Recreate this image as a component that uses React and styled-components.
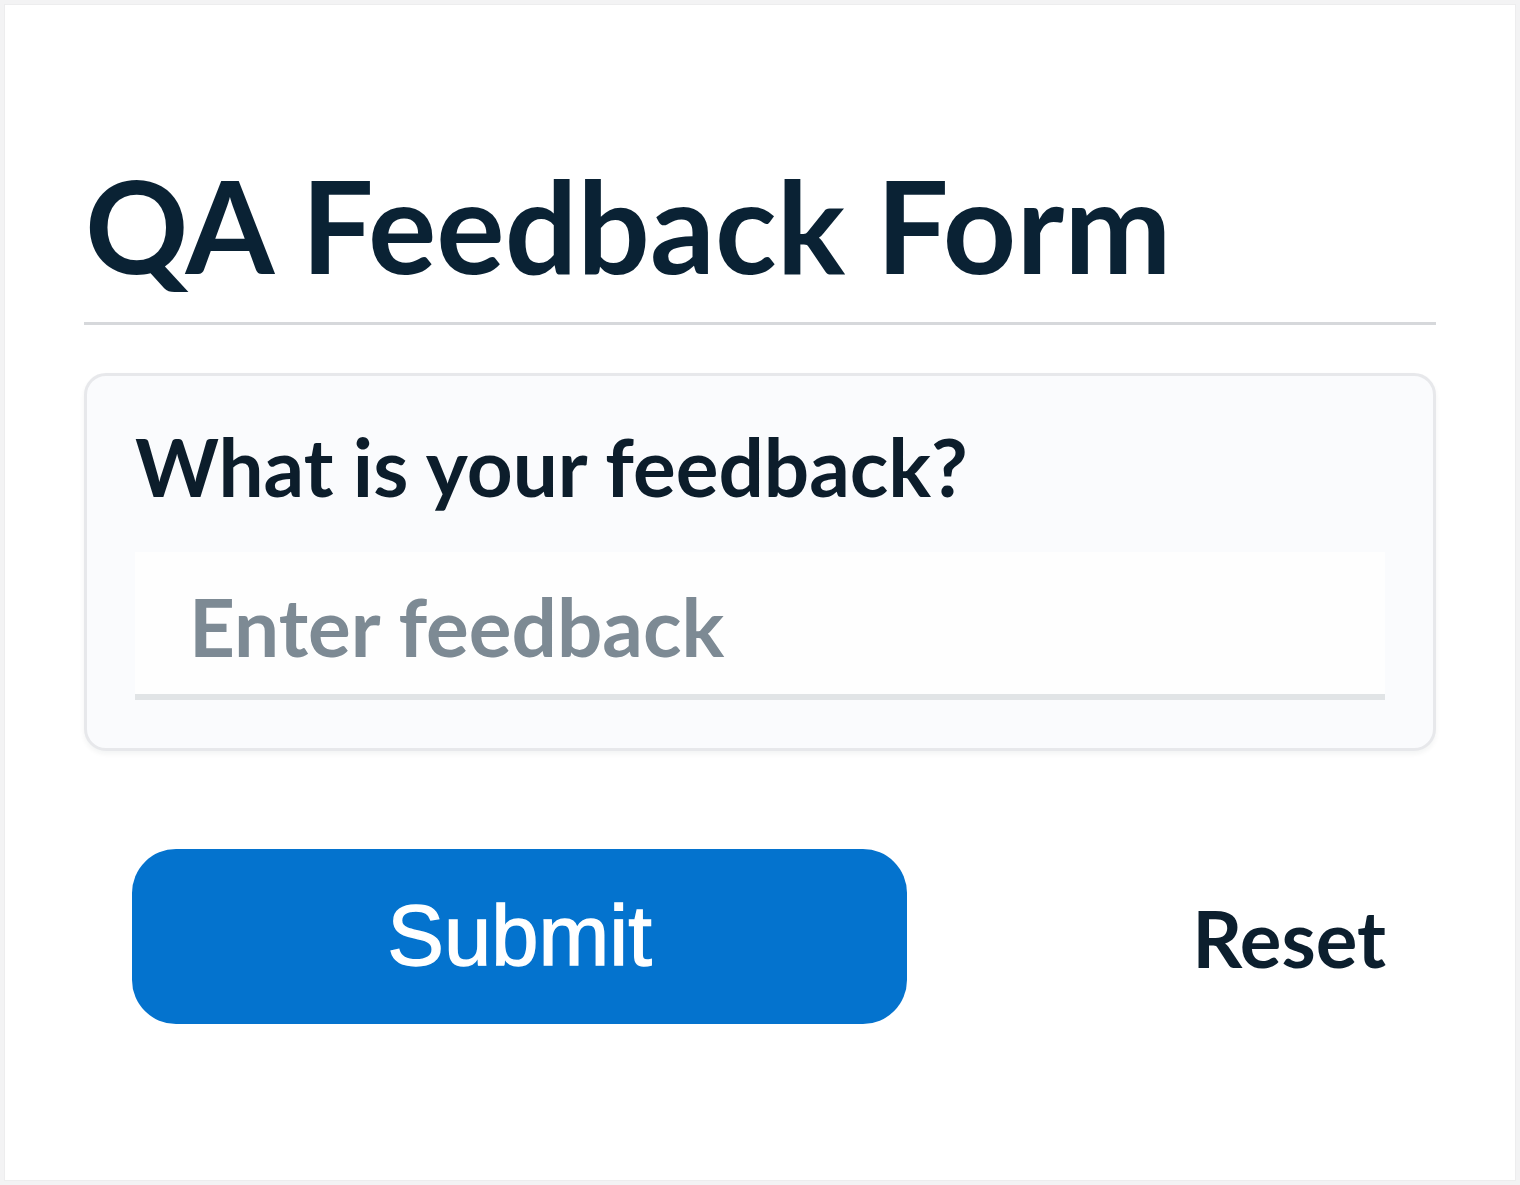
import React from "react";
import styled, { createGlobalStyle } from "styled-components";

const Global = createGlobalStyle`
  html, body { margin: 0; padding: 0; background: #f3f3f4; }
  body { font-family: "Lato", "Noto Sans", sans-serif; }
  #root { padding: 4px; box-sizing: border-box; }
`;

const Panel = styled.main`
  box-sizing: border-box;
  height: 1177px;
  background: #ffffff;
  border: 1px solid #ededee;
  padding: 79px 79px 0;
  display: flex;
  flex-direction: column;
`;

const Title = styled.h1`
  margin: 64px 0 48px;
  padding: 0 0 20px 1px;
  border-bottom: 3px solid #d6d8db;
  font-family: "Lato", sans-serif;
  font-weight: 700;
  font-size: 128px;
  line-height: 1.2;
  color: #0a2234;
`;

const Card = styled.section`
  border: 3px solid #e7e8eb;
  border-radius: 22px;
  background: #fafbfd;
  padding: 42px 48px 48px;
  box-shadow: 0 3px 5px rgba(20, 30, 40, 0.05);
  display: flex;
  flex-direction: column;
`;

const Label = styled.label`
  font-family: "Lato", sans-serif;
  font-weight: 700;
  font-size: 80px;
  line-height: 1.2;
  color: #0c1d2b;
  margin-bottom: 38px;
`;

const Input = styled.input`
  box-sizing: border-box;
  width: 100%;
  height: 148px;
  padding: 6px 48px 0 54px;
  border: none;
  border-bottom: 6px solid #e1e4e6;
  background: #fefefe;
  font-family: "Lato", sans-serif;
  font-weight: 700;
  font-size: 80px;
  line-height: 1.2;
  color: #0c1d2b;
  outline: none;
  &::placeholder { color: #7d8a94; opacity: 1; }
`;

const Actions = styled.div`
  margin-top: 98px;
  padding: 0 48px;
  display: flex;
  align-items: center;
  justify-content: space-between;
`;

const PrimaryButton = styled.button`
  width: 775px;
  height: 175px;
  border: none;
  border-radius: 44px;
  background: #0473ce;
  color: #ffffff;
  font-family: "Liberation Sans", Arial, sans-serif;
  font-weight: 400;
  font-size: 85px;
  -webkit-text-stroke: 1.4px #ffffff;
  cursor: pointer;
`;

const TextButton = styled.button`
  border: none;
  background: none;
  padding: 0;
  font-family: "Lato", sans-serif;
  font-weight: 700;
  font-size: 78px;
  line-height: 1.2;
  color: #0c1f2e;
  cursor: pointer;
  margin-top: 6px;
  margin-right: 2px;
`;

export default function App() {
  return (
    <>
      <Global />
      <Panel>
        <Title>QA Feedback Form</Title>
        <Card>
          <Label htmlFor="fb">What is your feedback?</Label>
          <Input id="fb" placeholder="Enter feedback" />
        </Card>
        <Actions>
          <PrimaryButton>Submit</PrimaryButton>
          <TextButton>Reset</TextButton>
        </Actions>
      </Panel>
    </>
  );
}
